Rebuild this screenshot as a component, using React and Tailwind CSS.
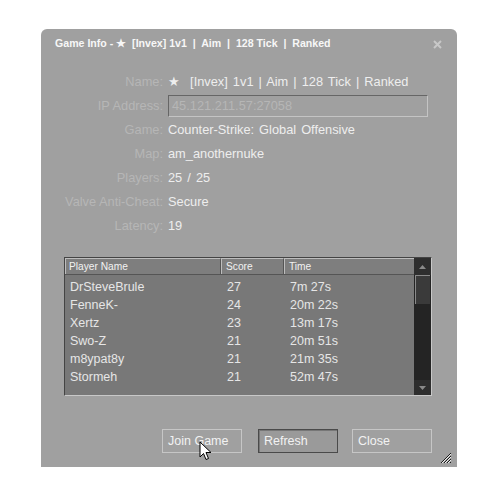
import React from 'react';

const info = [
  ['Name:', '★  [Invex] 1v1 | Aim | 128 Tick | Ranked'],
  ['IP Address:', null],
  ['Game:', 'Counter-Strike: Global Offensive'],
  ['Map:', 'am_anothernuke'],
  ['Players:', '25 / 25'],
  ['Valve Anti-Cheat:', 'Secure'],
  ['Latency:', '19'],
];

const players = [
  ['DrSteveBrule', '27', '7m 27s'],
  ['FenneK-', '24', '20m 22s'],
  ['Xertz', '23', '13m 17s'],
  ['Swo-Z', '21', '20m 51s'],
  ['m8ypat8y', '21', '21m 35s'],
  ['Stormeh', '21', '52m 47s'],
];

function Cursor() {
  return (
    <svg className="absolute left-[36px] top-[11px]" width="14" height="21" viewBox="0 0 14 21">
      <path d="M1 1 L1 16 L4.5 12.5 L7 18.5 L9.5 17.5 L7 11.5 L12 11.5 Z" fill="#fff" stroke="#000" strokeWidth="1" strokeLinejoin="miter" />
    </svg>
  );
}

export default function App() {
  return (
    <div className="w-[496px] h-[496px] bg-white pt-[29px] pl-[41px]" style={{ fontFamily: '"Liberation Sans", Arial, sans-serif' }}>
      <div className="relative w-[416px] h-[438px] bg-[#a0a0a0] rounded-t-[6px] flex flex-col">
        <div className="h-[30px] pl-[14px] pr-[15px] flex items-center justify-between">
          <span className="text-[10.6px] font-bold text-[#f7f7f7] whitespace-pre">Game Info - ★  [Invex] 1v1  |  Aim  |  128 Tick  |  Ranked</span>
          <svg width="9" height="9" viewBox="0 0 9 9">
            <path d="M1 1 L8 8 M8 1 L1 8" stroke="#c8c8c8" strokeWidth="2" />
          </svg>
        </div>

        <div className="mt-[11px] flex flex-col">
          {info.map(([label, value]) => (
            <div key={label} className="h-[24px] flex items-center text-[12.8px]">
              <div className="w-[122px] text-right text-[#b6b6b6] whitespace-nowrap">{label}</div>
              <div className="ml-[5px]">
                {value === null ? (
                  <div className="w-[260px] h-[22px] border border-t-[#666] border-l-[#666] border-r-[#c4c4c4] border-b-[#c4c4c4] flex items-center pl-[3px] text-[#b6b6b6]">
                    45.121.211.57:27058
                  </div>
                ) : (
                  <span className="text-[#eeeeee] whitespace-pre [word-spacing:1.5px]">{value}</span>
                )}
              </div>
            </div>
          ))}
        </div>

        <div className="mt-[19px] ml-[23px] w-[368px] h-[139px] border border-t-[#444] border-l-[#444] border-r-[#c8c8c8] border-b-[#c8c8c8] bg-[#787878] flex">
          <div className="flex-1 flex flex-col">
            <div className="h-[17px] flex text-[10.2px] text-[#f2f2f2] bg-[#7e7e7e] border-b border-[#555]">
              <div className="w-[156px] pl-[3px] flex items-center border-l border-t border-[#bdbdbd] border-r border-r-[#555]">Player Name</div>
              <div className="w-[63px] pl-[4px] flex items-center border-l border-t border-[#bdbdbd] border-r border-r-[#555]">Score</div>
              <div className="flex-1 pl-[4px] flex items-center border-l border-t border-[#bdbdbd]">Time</div>
            </div>
            <div className="pt-[3px] flex flex-col">
              {players.map(([name, score, time]) => (
                <div key={name} className="h-[18px] flex items-center text-[12.5px] text-[#e6e6e6]">
                  <div className="w-[157px] pl-[5px]">{name}</div>
                  <div className="w-[63px] pl-[5px]">{score}</div>
                  <div className="flex-1 pl-[5px]">{time}</div>
                </div>
              ))}
            </div>
          </div>
          <div className="w-[17px] bg-[#242424] flex flex-col">
            <div className="h-[17px] bg-[#2e2e2e] flex items-center justify-center">
              <svg width="7" height="4" viewBox="0 0 7 4"><path d="M0 4 L3.5 0 L7 4 Z" fill="#8a8a8a" /></svg>
            </div>
            <div className="h-[29px] mx-[1px] bg-[#3a3a3a] border-l border-t border-[#8a8a8a]" />
            <div className="flex-1" />
            <div className="h-[15px] bg-[#2e2e2e] flex items-center justify-center">
              <svg width="7" height="4" viewBox="0 0 7 4"><path d="M0 0 L3.5 4 L7 0 Z" fill="#8a8a8a" /></svg>
            </div>
          </div>
        </div>

        <div className="mt-[33px] ml-[121px] flex text-[12.5px] text-[#f2f2f2]">
          <div className="relative w-[80px] h-[24px] border border-[#c6c6c6] pl-[5px] flex items-center">
            Join Game
            <Cursor />
          </div>
          <div className="ml-[16px] w-[80px] h-[24px] border border-[#4a4a4a] bg-[#9a9a9a] pl-[5px] flex items-center shadow-[inset_1px_1px_0_#777]">
            Refresh
          </div>
          <div className="ml-[14px] w-[80px] h-[24px] border border-[#c6c6c6] pl-[5px] flex items-center">
            Close
          </div>
        </div>

        <svg className="absolute right-[5px] bottom-[3px]" width="12" height="12" viewBox="0 0 12 12">
          <path d="M1 11 L11 1 M4 11 L11 4 M7 11 L11 7 M10 11 L11 10" stroke="#1a1a1a" strokeWidth="1" />
          <path d="M2 11 L11 2 M5 11 L11 5 M8 11 L11 8" stroke="#f0f0f0" strokeWidth="1" />
        </svg>
      </div>
    </div>
  );
}
